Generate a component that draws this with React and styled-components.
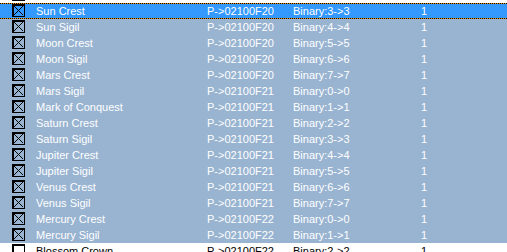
import React from "react";
import styled, { createGlobalStyle } from "styled-components";

const Global = createGlobalStyle`
  html, body {
    margin: 0;
    padding: 0;
    background: #ffffff;
    overflow: hidden;
  }
`;

const Viewport = styled.div`
  width: 507px;
  height: 252px;
  overflow: hidden;
  background: #ffffff;
  font-family: "Liberation Sans", Arial, sans-serif;
  font-size: 11px;
`;

/* list scrolled so the previous item sits mostly above the top edge */
const List = styled.div`
  display: flex;
  flex-direction: column;
  margin-top: -13px;
`;

const focusLine =
  "repeating-linear-gradient(90deg, #000 0 1px, #f08c00 1px 2px)";

const Row = styled.div`
  display: flex;
  align-items: flex-start;
  height: 16px;
  line-height: 16px;
  white-space: nowrap;
  color: ${(p) => (p.$state === "plain" ? "#000" : "#fff")};
  background: ${(p) =>
    p.$state === "focus"
      ? `${focusLine} top / 100% 1px no-repeat, ${focusLine} bottom / 100% 1px no-repeat, #3399ff`
      : p.$state === "selected"
      ? "#99b4d1"
      : "#ffffff"};
`;

const CheckCell = styled.div`
  width: 36px;
  flex: none;
  padding-left: 12px;
  box-sizing: border-box;
  padding-top: 1px;
`;

const Box = styled.div`
  width: 13px;
  height: 13px;
  box-sizing: border-box;
  border: 1px solid #000;
  box-shadow: inset 1px 1px 0 #000;
  background: ${(p) => (p.$plain ? "#fff" : "transparent")};
  display: flex;
`;

const Cell = styled.div`
  width: ${(p) => p.$w}px;
  flex: ${(p) => (p.$w ? "none" : "1")};
  overflow: hidden;
`;

function Check({ checked, plain }) {
  return (
    <Box $plain={plain}>
      {checked && (
        <svg width="11" height="11" viewBox="0 0 11 11">
          <path
            d="M1 1 L10 10 M10 1 L1 10"
            stroke="#000"
            strokeWidth="1"
            shapeRendering="crispEdges"
            fill="none"
          />
        </svg>
      )}
    </Box>
  );
}

const items = [
  [null, null, null, "plain", false],
  ["Sun Crest", "P->02100F20", "Binary:3->3", "focus", true],
  ["Sun Sigil", "P->02100F20", "Binary:4->4", "selected", true],
  ["Moon Crest", "P->02100F20", "Binary:5->5", "selected", true],
  ["Moon Sigil", "P->02100F20", "Binary:6->6", "selected", true],
  ["Mars Crest", "P->02100F20", "Binary:7->7", "selected", true],
  ["Mars Sigil", "P->02100F21", "Binary:0->0", "selected", true],
  ["Mark of Conquest", "P->02100F21", "Binary:1->1", "selected", true],
  ["Saturn Crest", "P->02100F21", "Binary:2->2", "selected", true],
  ["Saturn Sigil", "P->02100F21", "Binary:3->3", "selected", true],
  ["Jupiter Crest", "P->02100F21", "Binary:4->4", "selected", true],
  ["Jupiter Sigil", "P->02100F21", "Binary:5->5", "selected", true],
  ["Venus Crest", "P->02100F21", "Binary:6->6", "selected", true],
  ["Venus Sigil", "P->02100F21", "Binary:7->7", "selected", true],
  ["Mercury Crest", "P->02100F22", "Binary:0->0", "selected", true],
  ["Mercury Sigil", "P->02100F22", "Binary:1->1", "selected", true],
  ["Blossom Crown", "P->02100F22", "Binary:2->2", "plain", false],
];

export default function App() {
  return (
    <>
      <Global />
      <Viewport>
        <List>
          {items.map(([name, addr, bin, state, checked], i) => (
            <Row key={i} $state={state}>
              <CheckCell>
                <Check checked={checked} plain={state === "plain"} />
              </CheckCell>
              <Cell $w={171}>{name}</Cell>
              <Cell $w={86}>{addr}</Cell>
              <Cell $w={128}>{bin}</Cell>
              <Cell>{name ? "1" : null}</Cell>
            </Row>
          ))}
        </List>
      </Viewport>
    </>
  );
}
